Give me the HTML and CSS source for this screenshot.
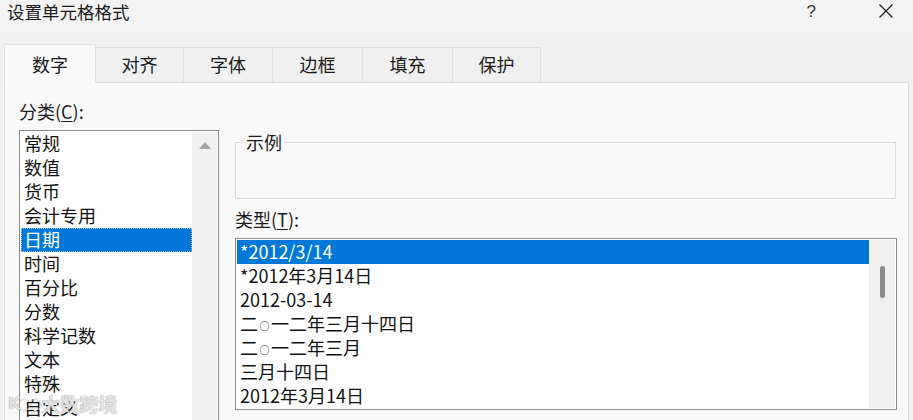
FILE: index.html
```html
<!DOCTYPE html>
<html lang="zh-CN">
<head>
<meta charset="utf-8">
<title>设置单元格格式</title>
<link rel="stylesheet" href="styles.css">
</head>
<body>
<div class="window">
  <div class="titlebar">
    <span class="title">设置单元格格式</span>
    <span class="help">?</span>
    <svg class="close" width="16" height="16" viewBox="0 0 16 16"><path d="M1.5 1.5 L14.5 14.5 M14.5 1.5 L1.5 14.5" stroke="#1a1a1a" stroke-width="1.2" fill="none"/></svg>
  </div>
  <div class="tabs">
    <div class="tab active w92">数字</div>
    <div class="tab w88">对齐</div>
    <div class="tab w89">字体</div>
    <div class="tab w90">边框</div>
    <div class="tab w90">填充</div>
    <div class="tab w88">保护</div>
  </div>
  <div class="panel">
    <div class="cols">
      <div class="left">
        <div class="label">分类(<u>C</u>):</div>
        <div class="listbox catlist">
          <div class="items">
            <div class="item">常规</div>
            <div class="item">数值</div>
            <div class="item">货币</div>
            <div class="item">会计专用</div>
            <div class="item selected focus">日期</div>
            <div class="item">时间</div>
            <div class="item">百分比</div>
            <div class="item">分数</div>
            <div class="item">科学记数</div>
            <div class="item">文本</div>
            <div class="item">特殊</div>
            <div class="item">自定义</div>
          </div>
          <div class="vscroll">
            <div class="uparrow"></div>
          </div>
        </div>
      </div>
      <div class="right">
        <div class="sample">
          <span class="sample-label">示例</span>
        </div>
        <div class="label">类型(<u>T</u>):</div>
        <div class="listbox typelist">
          <div class="items">
            <div class="item selected">*2012/3/14</div>
            <div class="item">*2012年3月14日</div>
            <div class="item">2012-03-14</div>
            <div class="item">二<span class="circ">○</span>一二年三月十四日</div>
            <div class="item">二<span class="circ">○</span>一二年三月</div>
            <div class="item">三月十四日</div>
            <div class="item">2012年3月14日</div>
          </div>
          <div class="vscroll">
            <div class="thumb"></div>
          </div>
        </div>
      </div>
    </div>
  </div>
  <div class="watermark"><span class="wm-logo">K◌◌</span><span class="wm-text">大数跨境</span></div>
</div>
</body>
</html>
```

FILE: styles.css
```css
* { box-sizing: border-box; }
html, body {
  margin: 0;
  padding: 0;
}
body {
  width: 913px;
  height: 420px;
  overflow: hidden;
  background: #f0f0f0;
  font-family: "Noto Sans CJK SC", "Noto Sans", sans-serif;
  color: #1a1a1a;
}
.window {
  position: relative;
  width: 913px;
  height: 420px;
  overflow: hidden;
}
.titlebar {
  height: 31px;
  background: #f3f3f3;
  display: flex;
  align-items: flex-start;
  padding-left: 7px;
  padding-top: 1px;
}
.title {
  font-size: 17.5px;
  line-height: 21px;
  flex: 1;
}
.help {
  font-family: "Liberation Sans", sans-serif;
  font-size: 17px;
  line-height: 21px;
  color: #333;
  margin-right: 62px;
}
.close {
  margin-top: 2px;
  margin-right: 19px;
}
.tabs {
  display: flex;
  align-items: flex-end;
  height: 51px;
  padding-left: 4px;
}
.tab {
  height: 35px;
  border: 1px solid #e0e0e0;
  border-bottom: none;
  border-left: none;
  background: #f0f0f0;
  font-size: 18px;
  line-height: 32px;
  text-align: center;
}
.tab.active {
  height: 39px;
  border-left: 1px solid #e0e0e0;
  background: #f9f9f9;
  position: relative;
  z-index: 1;
  margin-bottom: -1px;
  line-height: 39px;
}
.w92 { width: 92px; }
.w88 { width: 88px; }
.w89 { width: 89px; }
.w90 { width: 90px; }
.panel {
  margin-left: 4px;
  width: 905px;
  height: 340px;
  border: 1px solid #dcdcdc;
  background: #f9f9f9;
  padding: 17px 0 0 14px;
}
.cols {
  display: grid;
  grid-template-columns: 200px 662px;
  column-gap: 16px;
}
.label {
  font-size: 18px;
  line-height: 23px;
  height: 24px;
  margin-bottom: 6px;
}
.label u {
  text-underline-offset: 2px;
}
.listbox {
  border: 1px solid #8c8c8c;
  background: #fff;
  padding: 1px;
  display: flex;
}
.items {
  flex: 1;
}
.item {
  height: 24px;
  line-height: 23px;
  font-size: 18px;
  padding-left: 3px;
  white-space: nowrap;
  color: #111;
}
.circ {
  display: inline-block;
  width: 13px;
  font-size: 10px;
  text-align: center;
  vertical-align: 1px;
}
.item.selected {
  background: #0078d7;
  color: #fff;
}
.item.focus {
  outline: 1px dotted #9cc3e8;
  outline-offset: -1px;
}
.catlist {
  height: 300px;
}
.catlist .vscroll {
  width: 25px;
  background: #f0f0f0;
  display: flex;
  justify-content: center;
}
.uparrow {
  margin-top: 10px;
  width: 0;
  height: 0;
  border-left: 6px solid transparent;
  border-right: 6px solid transparent;
  border-bottom: 7px solid #a3a3a3;
}
.sample {
  position: relative;
  margin-top: 42px;
  height: 57px;
  width: 661px;
  border: 1px solid #dcdcdc;
  margin-bottom: 9px;
}
.sample-label {
  position: absolute;
  left: 7px;
  top: -13px;
  padding: 0 3px;
  background: #f9f9f9;
  font-size: 18px;
  line-height: 24px;
}
.typelist {
  height: 172px;
  width: 662px;
}
.typelist .vscroll {
  width: 26px;
  background: #f0f0f0;
  display: flex;
  justify-content: center;
}
.thumb {
  margin-top: 26px;
  width: 5px;
  height: 32px;
  border-radius: 3px;
  background: #8a8a8a;
}
.watermark {
  position: absolute;
  left: 8px;
  bottom: 4px;
  display: flex;
  align-items: center;
  gap: 2px;
  color: rgba(255, 255, 255, 0.75);
  text-shadow: 0 0 1px rgba(120,120,120,0.6), 0 0 1px rgba(120,120,120,0.6);
  font-size: 19px;
  font-weight: bold;
  line-height: 24px;
  pointer-events: none;
}
.wm-logo {
  font-family: "DejaVu Sans", sans-serif;
  font-size: 16px;
  letter-spacing: -3px;
}
```
